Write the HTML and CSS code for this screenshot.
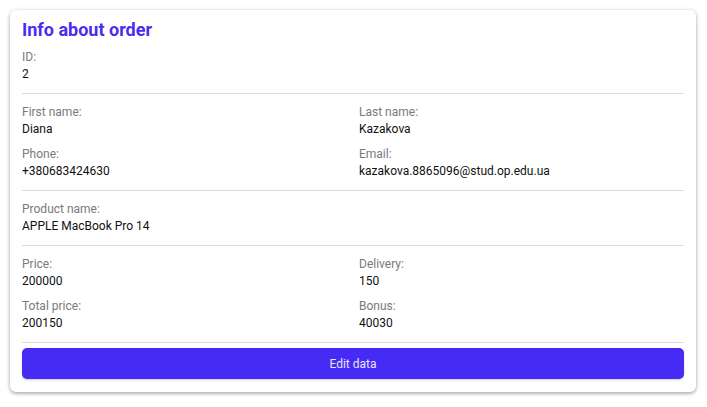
FILE: index.html
```html
<!DOCTYPE html>
<html lang="en">
<head>
<meta charset="utf-8">
<title>Info about order</title>
<link rel="stylesheet" href="styles.css">
</head>
<body>
<div class="card">
  <h1 class="title">Info about order</h1>
  <div class="field">
    <div class="label">ID:</div>
    <div class="value">2</div>
  </div>
  <hr class="divider">
  <div class="grid">
    <div class="field">
      <div class="label">First name:</div>
      <div class="value">Diana</div>
    </div>
    <div class="field">
      <div class="label">Last name:</div>
      <div class="value">Kazakova</div>
    </div>
    <div class="field">
      <div class="label">Phone:</div>
      <div class="value">+380683424630</div>
    </div>
    <div class="field">
      <div class="label">Email:</div>
      <div class="value">kazakova.8865096@stud.op.edu.ua</div>
    </div>
  </div>
  <hr class="divider">
  <div class="field">
    <div class="label">Product name:</div>
    <div class="value">APPLE MacBook Pro 14</div>
  </div>
  <hr class="divider">
  <div class="grid">
    <div class="field">
      <div class="label">Price:</div>
      <div class="value">200000</div>
    </div>
    <div class="field">
      <div class="label">Delivery:</div>
      <div class="value">150</div>
    </div>
    <div class="field">
      <div class="label">Total price:</div>
      <div class="value">200150</div>
    </div>
    <div class="field">
      <div class="label">Bonus:</div>
      <div class="value">40030</div>
    </div>
  </div>
  <hr class="divider divider-last">
  <button class="btn" type="button">Edit data</button>
</div>
</body>
</html>
```
FILE: styles.css
```css
* { box-sizing: border-box; }
html, body {
  margin: 0;
  padding: 0;
  background: #ffffff;
}
body {
  padding: 10px 11px 10px 10px;
  font-family: Roboto, "Liberation Sans", Arial, sans-serif;
  font-size: 12px;
  color: #111;
}
.card {
  background: #fff;
  border-radius: 6px;
  box-shadow: 0 1px 4px rgba(0,0,0,0.28), 0 2px 3px rgba(0,0,0,0.12);
  padding: 10px 12px 13px 12px;
}
.title {
  margin: 0 0 9px 0;
  font-size: 18px;
  line-height: 20px;
  font-weight: 700;
  color: #4a2bef;
}
.grid {
  display: grid;
  grid-template-columns: 1fr 1fr;
  column-gap: 12px;
  row-gap: 8px;
}
.field {
  display: flex;
  flex-direction: column;
}
.label {
  line-height: 17px;
  color: #7a7a7a;
}
.value {
  line-height: 17px;
  color: #111;
}
.divider {
  border: 0;
  border-top: 1px solid #dcdcdc;
  margin: 10px 0;
}
.divider-last {
  margin-bottom: 5px;
}
.btn {
  display: block;
  width: 100%;
  height: 31px;
  border: 0;
  border-radius: 5px;
  background: #452bf4;
  color: #e8e6ff;
  font-family: Roboto, "Liberation Sans", Arial, sans-serif;
  font-size: 12px;
  box-shadow: 0 1px 2px rgba(0,0,0,0.2);
  cursor: pointer;
}
```
